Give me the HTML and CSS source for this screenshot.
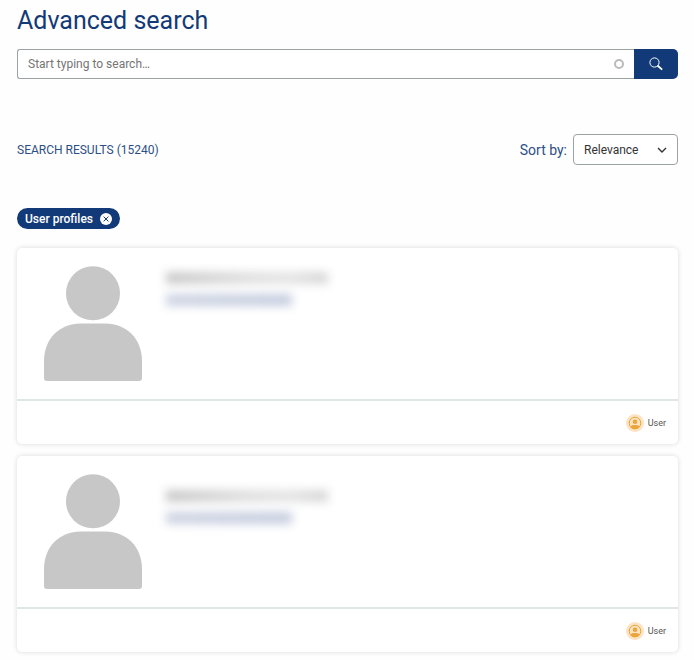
FILE: index.html
```
<!DOCTYPE html>
<html lang="en">
<head>
    <meta charset="UTF-8">
    <meta name="viewport" content="width=device-width, initial-scale=1.0">
    <title>Advanced search</title>
    <link rel="stylesheet" href="styles.css">
</head>
<body>
    <main class="wrapper">
        <h1>Advanced search</h1>
        <form class="search">
            <div class="search-field">
                <input type="text" id="search-text" placeholder="Start typing to search…" aria-label="Search">
                <span class="throbber"></span>
            </div>
            <button type="submit" class="search-btn" aria-label="Search">
                <svg width="14" height="14" viewBox="0 0 14 14" fill="none" stroke="#fff">
                    <circle cx="5.5" cy="5.5" r="4.6" stroke-width="1"/>
                    <path d="M9 9l3.6 3.2" stroke-width="1.8" stroke-linecap="round"/>
                </svg>
            </button>
        </form>

        <div class="toolbar">
            <div class="count">SEARCH RESULTS (15240)</div>
            <div class="sort">
                <label for="sort-by">Sort by:</label>
                <div class="select-box">
                    <select id="sort-by">
                        <option>Relevance</option>
                    </select>
                    <svg class="arrow" width="10" height="6" viewBox="0 0 10 6" fill="none" stroke="#333" stroke-width="1.4">
                        <path d="M1 1l4 4 4-4"/>
                    </svg>
                </div>
            </div>
        </div>

        <button type="button" class="chip">
            User profiles
            <svg width="12" height="12" viewBox="0 0 12 12">
                <circle cx="6" cy="6" r="6" fill="#fff"/>
                <path d="M3.6 3.6l4.8 4.8M8.4 3.6l-4.8 4.8" stroke="#133a78" stroke-width="1"/>
            </svg>
        </button>

        <div class="results">
            <article class="card">
                <div class="card-body">
                    <svg class="avatar" width="98" height="115" viewBox="0 0 99 116" fill="#c7c7c7">
                        <circle cx="49.5" cy="27.5" r="27.3"/>
                        <path d="M0 96C0 73 16 58 37 58H62C83 58 99 73 99 96V113Q99 116 96 116H3Q0 116 0 113Z"/>
                    </svg>
                    <div class="hidden-info">
                        <div class="hidden-name"></div>
                        <div class="hidden-link"></div>
                    </div>
                </div>
                <div class="card-footer">
                    <svg width="18" height="18" viewBox="0 0 18 18">
                        <circle cx="9" cy="9" r="9" fill="#fbe3c3"/>
                        <circle cx="9" cy="9" r="5.8" fill="none" stroke="#eba53a"/>
                        <circle cx="9" cy="7.8" r="2.3" fill="#eba53a"/>
                        <path d="M4.400 13C5.500 11.300 7 11 9 11s3.500.3 4.600 2C12.500 14.500 11 15.200 9 15.200S5.500 14.500 4.400 13Z" fill="#eba53a"/>
                    </svg>
                    <span>User</span>
                </div>
            </article>

            <article class="card">
                <div class="card-body">
                    <svg class="avatar" width="98" height="115" viewBox="0 0 99 116" fill="#c7c7c7">
                        <circle cx="49.5" cy="27.5" r="27.3"/>
                        <path d="M0 96C0 73 16 58 37 58H62C83 58 99 73 99 96V113Q99 116 96 116H3Q0 116 0 113Z"/>
                    </svg>
                    <div class="hidden-info lower">
                        <div class="hidden-name"></div>
                        <div class="hidden-link"></div>
                    </div>
                </div>
                <div class="card-footer">
                    <svg width="18" height="18" viewBox="0 0 18 18">
                        <circle cx="9" cy="9" r="9" fill="#fbe3c3"/>
                        <circle cx="9" cy="9" r="5.8" fill="none" stroke="#eba53a"/>
                        <circle cx="9" cy="7.8" r="2.3" fill="#eba53a"/>
                        <path d="M4.400 13C5.500 11.300 7 11 9 11s3.500.3 4.600 2C12.500 14.500 11 15.200 9 15.200S5.500 14.500 4.400 13Z" fill="#eba53a"/>
                    </svg>
                    <span>User</span>
                </div>
            </article>
        </div>
    </main>
</body>
</html>
```
FILE: styles.css
```
* {
    box-sizing: border-box;
}

body {
    margin: 0;
    background-color: #fefefe;
    color: #133a78;
    font-family: Roboto, "Liberation Sans", sans-serif;
    font-size: 12px;
}

.wrapper {
    padding: 5px 16px 7px 17px;
}

h1 {
    margin: 0 0 12px;
    font-size: 25px;
    line-height: 32px;
    font-weight: 400;
}

input, select, button {
    font-family: inherit;
    font-size: 12px;
}

.search {
    display: flex;
    height: 30px;
}

.search-field {
    display: flex;
    align-items: center;
    flex: 1;
    padding: 0 10px;
    background-color: white;
    border: 1px solid #9da3a5;
    border-right: none;
    border-radius: 3px 0 0 3px;
}

.search-field input {
    flex: 1;
    padding: 0;
    border: none;
    outline: none;
    background: none;
}

.search-field input::placeholder {
    color: #757575;
}

.throbber {
    width: 10px;
    height: 10px;
    border: 2px solid #bbb;
    border-radius: 50%;
}

.search-btn {
    display: flex;
    align-items: center;
    justify-content: center;
    width: 44px;
    padding: 0;
    background-color: #133a78;
    border: none;
    border-radius: 0 5px 5px 0;
    cursor: pointer;
}

.toolbar {
    display: flex;
    align-items: center;
    justify-content: space-between;
    margin-top: 55px;
}

.count {
    color: #2c4f86;
}

.sort {
    display: flex;
    align-items: center;
    gap: 6px;
    color: #2c4f86;
    font-size: 14px;
}

.select-box {
    position: relative;
}

.select-box select {
    display: block;
    appearance: none;
    width: 105px;
    height: 31px;
    padding: 0 10px;
    background-color: white;
    border: 1px solid #9da3a5;
    border-radius: 4px;
    color: #333;
}

.arrow {
    position: absolute;
    right: 11px;
    top: 13px;
    pointer-events: none;
}

.chip {
    display: flex;
    align-items: center;
    gap: 7px;
    height: 21px;
    margin: 43px 0 19px;
    padding: 0 8px;
    background-color: #133a78;
    border: none;
    border-radius: 11px;
    color: white;
    font-weight: 500;
    cursor: pointer;
}

.results {
    display: grid;
    gap: 12px;
}

.card {
    background-color: white;
    border-radius: 5px;
    box-shadow: 0 0 5px rgba(0, 0, 0, 0.15);
}

.card-body {
    display: flex;
    gap: 24px;
    padding: 18px 27px;
    border-bottom: 2px solid #e0e5e6;
}

.hidden-info {
    display: grid;
    gap: 10px;
    align-content: start;
    padding-top: 6px;
}

.lower {
    padding-top: 16px;
}

.hidden-name, .hidden-link {
    height: 12px;
    filter: blur(5px);
}

.hidden-name {
    width: 162px;
    background: linear-gradient(90deg, #c8c8c8, #dedede 50%, #e4e4e4 75%, #d6d6d6);
}

.hidden-link {
    width: 126px;
    background: linear-gradient(90deg, #cdd3e2, #c6cddf);
}

.card-footer {
    display: flex;
    align-items: center;
    justify-content: flex-end;
    gap: 4px;
    height: 43px;
    padding-right: 12px;
    color: #555;
    font-size: 9px;
}
```
